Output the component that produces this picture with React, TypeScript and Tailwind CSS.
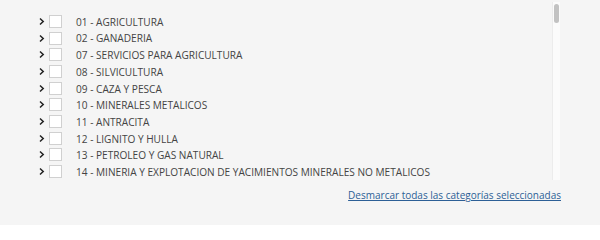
import React from "react";

const items = [
  "01 - AGRICULTURA",
  "02 - GANADERIA",
  "07 - SERVICIOS PARA AGRICULTURA",
  "08 - SILVICULTURA",
  "09 - CAZA Y PESCA",
  "10 - MINERALES METALICOS",
  "11 - ANTRACITA",
  "12 - LIGNITO Y HULLA",
  "13 - PETROLEO Y GAS NATURAL",
  "14 - MINERIA Y EXPLOTACION DE YACIMIENTOS MINERALES NO METALICOS",
];

function Chevron() {
  return (
    <svg width="7" height="9" viewBox="0 0 7 9" className="shrink-0">
      <polyline points="2,1.5 5.2,4.5 2,7.5" fill="none" stroke="#222" strokeWidth="1.5" />
    </svg>
  );
}

export default function App() {
  return (
    <div
      className="w-[600px] h-[225px] bg-[#f5f5f5] overflow-hidden"
      style={{ fontFamily: '"Open Sans", "Liberation Sans", sans-serif' }}
    >
      <div className="flex pt-[2px] pl-[38px] w-[560px]">
        <div className="flex-1 h-[178px] overflow-hidden pt-[11px]">
          {items.map((t) => (
            <div key={t} className="flex items-center h-[16.7px]">
              <Chevron />
              <div className="ml-[4px] w-[13px] h-[13px] bg-white border border-[#d0d0d0] shrink-0" />
              <span className="ml-[14px] text-[10.1px] text-[#444] whitespace-nowrap leading-none pt-[1px]">{t}</span>
            </div>
          ))}
        </div>
        <div className="w-[8px] h-[178px] bg-[#fbfbfb] border-l border-[#ececec] pt-[2px] flex justify-center">
          <div className="w-[5px] h-[19px] rounded-full bg-[#c2c2c2]" />
        </div>
      </div>
      <div className="flex justify-end w-[561px] mt-[10px]">
        <a href="#" className="text-[10px] text-[#2d5f96] underline leading-none">
          Desmarcar todas las categorías seleccionadas
        </a>
      </div>
    </div>
  );
}
